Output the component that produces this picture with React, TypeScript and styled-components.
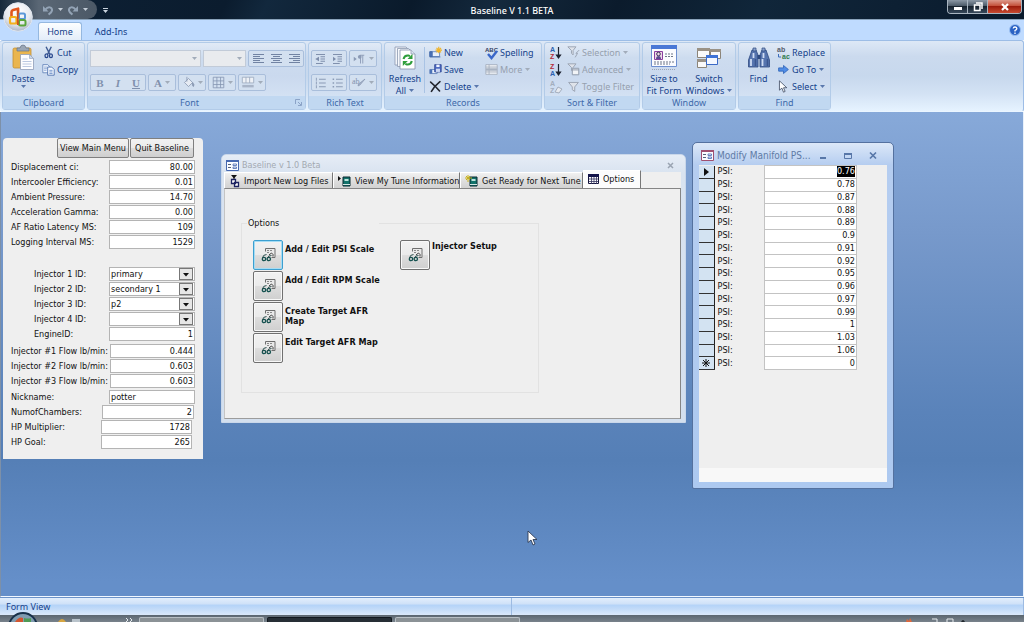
import React, { useEffect, useRef } from 'react';
import styled, { createGlobalStyle, css } from 'styled-components';

const uiFont = '"Noto Sans", "Open Sans", sans-serif';
const formFont = '"DejaVu Sans Condensed", "DejaVu Sans", sans-serif';

const GlobalStyle = createGlobalStyle`
  * { box-sizing: border-box; }
  body { margin: 0; overflow: hidden; font-family: ${uiFont}; font-size: 9px; }
  button, input, select { font: inherit; color: inherit; margin: 0; padding: 0; border: 0; background: none; border-radius: 0; }
  svg { display: block; flex: none; overflow: visible; }
`;

/* ---------- shell ---------- */

const Shell = styled.div`
  min-height: 100vh;
  display: flex;
  flex-direction: column;
`;

const TitleBar = styled.header`
  position: relative;
  display: grid;
  grid-template-columns: 1fr auto 1fr;
  height: 20px;
  color: #fff;
  background: linear-gradient(115deg, #0d2136 0%, #0b1c2e 22%, #12283d 26%, #0a1a2b 40%, #14293d 48%, #0b1b2c 60%, #10263a 74%, #0a1a2c 100%);
  border-bottom: 1px solid #8aa3bb;
`;

const QuickAccess = styled.div`
  display: flex;
  align-items: flex-start;
  gap: 6px;
`;

const QuickPill = styled.div`
  display: flex;
  align-items: center;
  gap: 4px;
  width: 97px;
  height: 19px;
  padding-left: 42px;
  border-radius: 0 10px 10px 0;
  background: linear-gradient(90deg, #16293b, #5a6775 40%, #4b5866);
  button { height: 12px; }
`;

const AppTitle = styled.h1`
  margin: 0;
  font-size: 9px;
  font-weight: 500;
  line-height: 21px;
`;

const Orb = styled.button`
  position: absolute;
  left: 3px;
  top: 2px;
  width: 30px;
  height: 30px;
  z-index: 2;
`;

const WindowButtons = styled.div`
  justify-self: end;
  display: flex;
  height: 14px;
  margin-right: 2px;
  border: 1px solid #a9b5c0;
  border-top: 0;
  border-radius: 0 0 4px 4px;
  overflow: hidden;
`;

const WindowButton = styled.button<{ $close?: boolean }>`
  display: flex;
  align-items: center;
  justify-content: center;
  width: ${p => (p.$close ? 33 : 20)}px;
  border-right: 1px solid #a9b5c0;
  background: linear-gradient(#8b98a5, #4c5a68 45%, #16222e 50%, #37485a);
  ${p => p.$close && css`
    border-right: 0;
    background: linear-gradient(#dd9a8c, #c4503a 45%, #9c1c0c 50%, #c84a30);
  `}
`;

const TabRow = styled.nav`
  display: flex;
  align-items: flex-end;
  height: 20px;
  padding-left: 38px;
  padding-right: 3px;
  background: #bfdbff;
`;

const RibbonTab = styled.button<{ $active?: boolean }>`
  width: 44px;
  height: 18px;
  color: #15428b;
  line-height: 17px;
  border-radius: 3px 3px 0 0;
  ${p => p.$active && css`
    background: linear-gradient(#fdfeff, #e3edf9);
    border: 1px solid #95b8e0;
    border-bottom: 0;
  `}
`;

const TabGap = styled.span<{ $grow?: boolean }>`
  width: 7px;
  flex: ${p => (p.$grow ? '1 0 auto' : 'none')};
`;

const HelpButton = styled.button`
  height: 12px;
  margin-bottom: 4px;
`;

/* ---------- ribbon ---------- */

const Ribbon = styled.section`
  display: flex;
  gap: 2px;
  height: 72px;
  padding: 1px 2px;
  border: 1px solid #9dbde6;
  border-left: 0;
  border-bottom-color: #eaf5ff;
  border-radius: 3px;
  background: linear-gradient(#dde8f6, #cbdaee 22%, #c7d8ed 50%, #d3e2f4 75%, #e6f3ff);
`;

const Group = styled.section<{ $width: number }>`
  flex: none;
  display: flex;
  flex-direction: column;
  width: ${p => p.$width}px;
  border: 1px solid #b2cbe8;
  border-radius: 3px;
  background: linear-gradient(#e1eaf6, #cddcef 22%, #cad9ee 50%, #d9e6f6);
  color: #15428b;
`;

const GroupBody = styled.div<{ $pad?: number }>`
  flex: 1 1 0;
  min-height: 0;
  display: flex;
  padding: 0 ${p => p.$pad ?? 4}px;
`;

const GroupTitle = styled.h2<{ $launcher?: boolean }>`
  flex: none;
  display: flex;
  align-items: center;
  justify-content: center;
  position: relative;
  margin: 0;
  height: 13px;
  padding-right: ${p => (p.$launcher ? 14 : 0)}px;
  font-size: 9px;
  font-weight: 400;
  color: #3e6aaa;
  background: #c1d8f1;
  svg { position: absolute; right: 3px; }
`;

const BigButton = styled.button<{ $width: number }>`
  flex: none;
  align-self: flex-start;
  display: flex;
  flex-direction: column;
  align-items: center;
  width: ${p => p.$width}px;
  padding-top: 2px;
  line-height: 12px;
  color: #15428b;
  white-space: nowrap;
  svg:first-child { margin-bottom: 2px; }
`;

const Stack = styled.div<{ $width?: number }>`
  flex: none;
  display: flex;
  flex-direction: column;
  padding-top: 1px;
  width: ${p => (p.$width ? p.$width + 'px' : 'auto')};
`;

const SmallButton = styled.button`
  flex: none;
  display: flex;
  align-items: center;
  gap: 2px;
  height: 17px;
  color: #15428b;
  white-space: nowrap;
  &:disabled { color: #96a0ae; }
`;

const Caption = styled.span`
  display: flex;
  align-items: center;
  gap: 3px;
`;

const Divider = styled.span`
  flex: none;
  width: 1px;
  height: 46px;
  margin: 4px 4px 0 0;
  background: #a9c3e4;
`;

const ToolRows = styled.div`
  display: flex;
  flex-direction: column;
  gap: 7px;
  padding-top: 7px;
`;

const ToolRow = styled.div`
  display: flex;
  gap: 2px;
  height: 17px;
`;

const Combo = styled.select<{ $width: number }>`
  appearance: none;
  width: ${p => p.$width}px;
  height: 17px;
  border: 1px solid #c2cbd8;
  background: #e9ebee;
  opacity: 1;
`;

const ComboBox = styled.label`
  position: relative;
  display: flex;
  svg { position: absolute; right: 4px; top: 7px; }
`;

const ToolSet = styled.div`
  display: flex;
  border: 1px solid #a9bedb;
  border-radius: 2px;
  background: #d3e0f0;
`;

const Tool = styled.button<{ $width: number; $serif?: boolean }>`
  display: flex;
  align-items: center;
  justify-content: center;
  gap: 3px;
  width: ${p => p.$width}px;
  color: #8090ad;
  ${p => p.$serif && css`font: bold 11px "Liberation Serif", serif;`}
`;

/* ---------- workspace ---------- */

const Workspace = styled.main`
  position: relative;
  flex: 1;
  min-height: 400px;
  border-left: 1px solid #7d90a8;
  border-right: 1px solid #e8f1fc;
  border-bottom: 1px solid #f2f8ff;
  background: linear-gradient(#87a9d9, #7799cb 25%, #5a83ba 62%, #557fb6 72%, #658fc9 97%);
  font-family: ${formFont};
  color: #111;
`;

const TunePanel = styled.form`
  position: absolute;
  left: 2px;
  top: 26px;
  width: 200px;
  padding-bottom: 10px;
  border-radius: 4px 4px 0 0;
  background: #efefef;
`;

const PanelActions = styled.div`
  display: flex;
  justify-content: flex-end;
  gap: 1px;
  padding-right: 9px;
  margin-bottom: 1px;
`;

const PanelButton = styled.button<{ $width: number }>`
  width: ${p => p.$width}px;
  height: 20px;
  border: 1px solid #7f7f7f;
  border-radius: 2px;
  background: linear-gradient(#f2f2f2, #ebebeb 48%, #dcdcdc 52%, #cfcfcf);
  white-space: nowrap;
`;

const FieldGroup = styled.div<{ $before?: number }>`
  margin-top: ${p => p.$before ?? 0}px;
`;

const FieldRow = styled.div<{ $indent?: boolean; $end: number }>`
  display: flex;
  align-items: center;
  justify-content: space-between;
  height: 15px;
  padding-left: ${p => (p.$indent ? 31 : 8)}px;
  padding-right: ${p => p.$end}px;
  white-space: nowrap;
`;

const fieldBox = css`
  height: 14px;
  border: 1px solid #b4b4b4;
  background: #fff;
`;

const Field = styled.input<{ $width: number; $left?: boolean }>`
  ${fieldBox}
  width: ${p => p.$width}px;
  padding: 0 1px;
  text-align: ${p => (p.$left ? 'left' : 'right')};
`;

const Picker = styled.span`
  position: relative;
  display: block;
  width: 86px;
  height: 14px;
  select {
    ${fieldBox}
    appearance: none;
    display: block;
    width: 100%;
    padding: 0 1px;
  }
  svg { position: absolute; right: 2px; top: 1px; pointer-events: none; }
`;

const MainWindow = styled.section`
  position: absolute;
  left: 220px;
  top: 42px;
  width: 465px;
  padding: 0 4px 3px 2px;
  border: 1px solid #c9d7ea;
  border-radius: 5px 5px 0 0;
  background: linear-gradient(#e6edf6, #d9e3f0 18px, #d3dfee);
`;

const MainTitle = styled.header`
  display: flex;
  align-items: center;
  gap: 3px;
  height: 17px;
  padding: 3px 7px 0 2px;
  color: #a3a9b1;
  button { margin-left: auto; height: 8px; }
`;

const Pages = styled.div`
  background: #efefef;
`;

const PageTabs = styled.div`
  display: flex;
  align-items: flex-end;
  height: 16px;
`;

const PageTab = styled.button<{ $width: number; $active?: boolean }>`
  flex: none;
  display: flex;
  align-items: center;
  gap: 4px;
  width: ${p => p.$width}px;
  height: 16px;
  padding-left: 4px;
  border-right: 1px solid #777;
  border-top: 1px solid #fff;
  border-left: 1px solid #fff;
  background: linear-gradient(#f1f1f1, #dcdcdc 60%, #d2d2d2);
  white-space: nowrap;
  ${p => p.$active && css`
    height: 18px;
    padding-bottom: 2px;
    background: #fcfcfc;
  `}
`;

const PageBody = styled.div`
  height: 231px;
  padding: 29px 0 0 16px;
  border-top: 1px solid #858585;
  border-right: 1px solid #858585;
  border-bottom: 1px solid #9c9c9c;
  border-left: 1px solid #c4c4c4;
`;

const OptionsFrame = styled.fieldset`
  width: 298px;
  height: 175px;
  margin: 0;
  padding: 11px 0 0 11px;
  border: 1px solid #e2e2e2;
  legend {
    width: 132px;
    margin-left: -6px;
    padding: 0 0 0 1px;
    line-height: 11px;
  }
`;

const OptionColumns = styled.div`
  display: flex;
  gap: 17px;
`;

const OptionList = styled.div<{ $width: number }>`
  display: flex;
  flex-direction: column;
  gap: 1px;
  width: ${p => p.$width}px;
`;

const OptionRow = styled.div<{ $raised?: boolean }>`
  display: flex;
  gap: 2px;
  label {
    max-width: 98px;
    padding-top: ${p => (p.$raised ? 1 : 4)}px;
    font-weight: bold;
    line-height: 10px;
  }
`;

const OptionButton = styled.button<{ $focus?: boolean }>`
  flex: none;
  display: flex;
  align-items: center;
  justify-content: center;
  width: 30px;
  height: 30px;
  border: 1px solid ${p => (p.$focus ? '#3c9fd0' : '#707070')};
  border-radius: 2px;
  box-shadow: inset 0 0 0 1px ${p => (p.$focus ? '#a5dcf4' : '#f8f8f8')};
  background: linear-gradient(#f1f1f1, #ebebeb 48%, #dddddd 52%, #cfcfcf);
`;

const PsiWindow = styled.section`
  position: absolute;
  left: 691px;
  top: 30px;
  width: 202px;
  padding: 0 6px 6px;
  border: 1px solid #54719f;
  border-radius: 5px 5px 2px 2px;
  background: linear-gradient(#dce8f8, #b5cdf0 22px, #adc9f0);
`;

const PsiTitle = styled.header`
  display: flex;
  align-items: center;
  height: 22px;
  padding: 3px 10px 0 2px;
  gap: 3px;
  color: #5f7ba6;
  font-size: 10px;
  h2 { margin: 0; font-size: 10px; font-weight: 400; white-space: nowrap; }
`;

const PsiControls = styled.div`
  display: flex;
  gap: 17px;
  margin-left: auto;
  button { height: 9px; }
`;

const PsiBody = styled.div`
  min-height: 317px;
  display: flex;
  flex-direction: column;
  justify-content: space-between;
  background: #efefef;
`;

const PsiTable = styled.table`
  width: 158px;
  height: 205px;
  border-collapse: collapse;
  th, td { padding: 0; line-height: 11px; }
  th { text-align: left; font-weight: 400; padding-left: 3px; }
`;

const Selector = styled.td`
  width: 15px;
  border-right: 1px solid #222;
  border-bottom: 1px solid #333;
  background: #d3e3f2;
  svg { margin: 0 auto; }
`;

const ValueCell = styled.td`
  width: 92px;
  border: 1px solid #c3c3c3;
  background: #fff;
`;

const ValueInput = styled.input`
  display: block;
  width: 100%;
  height: 11px;
  padding-right: 1px;
  text-align: right;
  outline: 0;
  &::selection { background: #000; color: #fff; }
`;

const PsiFoot = styled.div`
  height: 14px;
  background: #f8f8f8;
`;

const Pointer = styled.div`
  position: absolute;
  left: 526px;
  top: 418px;
`;

/* ---------- bottom bars ---------- */

const StatusBar = styled.footer`
  display: flex;
  height: 18px;
  border-top: 1px solid #6c93c8;
  background: linear-gradient(#e2eefc, #cfe1f8 35%, #b4d3f8 42%, #bfd9f8 60%, #dbe9fa);
  color: #15428b;
  line-height: 17px;
`;

const StatusText = styled.span`
  flex: 1;
  padding-left: 6px;
  border-right: 1px solid #9dbbe2;
`;

const TaskBar = styled.div`
  position: relative;
  display: flex;
  gap: 3px;
  height: 7px;
  padding: 2px 0 0 139px;
  background: linear-gradient(#5b6670, #78828b);
`;

const TaskButton = styled.button<{ $active?: boolean }>`
  width: 125px;
  height: 5px;
  padding-left: 8px;
  border: 1px solid ${p => (p.$active ? '#12181e' : '#b8bfc4')};
  border-bottom: 0;
  border-radius: 2px 2px 0 0;
  background: ${p => (p.$active ? '#262e35' : '#8b9296')};
`;

const StartOrb = styled.button`
  position: absolute;
  left: 7px;
  bottom: 0;
  height: 10px;
  overflow: hidden;
`;

const LaunchIcons = styled.div<{ $left: number }>`
  position: absolute;
  left: ${p => p.$left}px;
  bottom: 0;
`;

/* ---------- icons ---------- */

const Arrow = ({ color = '#5a78ad' }: { color?: string }) => (
  <svg width="5" height="3" viewBox="0 0 5 3"><path d="M0 0h5L2.500 3z" fill={color} /></svg>
);

const Svg = ({ w = 14, h = 14, vb = 16, children }: { w?: number; h?: number; vb?: number; children: React.ReactNode }) => (
  <svg width={w} height={h} viewBox={`0 0 ${vb} ${vb}`} fill="none">{children}</svg>
);

const OfficeLogo = () => (
  <svg width="30" height="30" viewBox="0 0 30 30" fill="none">
    <defs>
      <radialGradient id="orb" cx=".5" cy=".3" r=".75">
        <stop offset="0" stopColor="#fff" /><stop offset=".6" stopColor="#e6e9ee" /><stop offset="1" stopColor="#9eabc0" />
      </radialGradient>
    </defs>
    <circle cx="15" cy="15" r="14.300" fill="url(#orb)" stroke="#dfe5ee" strokeWidth="1" />
    <path d="M8.500 15V10q0-1.600 1.600-2l5-1.300V13" stroke="#e1551c" strokeWidth="2.600" strokeLinejoin="round" />
    <rect x="7" y="15" width="6.500" height="6.500" rx="1.500" stroke="#f3b01c" strokeWidth="2.200" />
    <rect x="16" y="11.500" width="6" height="5.500" rx="1.500" stroke="#5c98d8" strokeWidth="2" />
    <rect x="16" y="18" width="6.500" height="5.500" rx="1.500" stroke="#5aa63c" strokeWidth="2" />
    <path d="M14.800 8v15" stroke="#d2521c" strokeWidth="1.800" />
  </svg>
);

const Undo = ({ flip }: { flip?: boolean }) => (
  <svg width="12" height="12" viewBox="0 0 12 12" fill="none">
    <g transform={flip ? 'matrix(-1 0 0 1 12 0)' : undefined}>
      <path d="M3.500 5.500C6 2 10.500 3 10 6.500 9.700 8.500 8 9.500 6.500 10.500" stroke="#93a3b5" strokeWidth="2" />
      <path d="M1 2v5.500h5.500z" fill="#93a3b5" />
    </g>
  </svg>
);

const PasteIcon = () => (
  <svg width="26" height="26" viewBox="0 0 26 26">
    <rect x="3" y="3" width="18" height="20" rx="1.500" fill="#eab54e" stroke="#c28f35" strokeWidth=".8" />
    <path d="M7 6V3h3q.5-3 3-3t3 3h3v3z" fill="#9aa6b5" stroke="#667488" strokeWidth=".7" />
    <path d="M10.500 9.500h9l4 4v11h-13z" fill="#fdfdff" stroke="#8f9db8" strokeWidth=".8" />
    <path d="M19.500 9.500v4h4z" fill="#cbd7ea" stroke="#8f9db8" strokeWidth=".6" />
    <path d="M12.500 14h5M12.500 16.500h9M12.500 19h9M12.500 21.500h9" stroke="#b3c2de" strokeWidth=".9" />
  </svg>
);

const CutIcon = () => (
  <Svg w={13} h={13}>
    <path d="M5 1l4.500 9M11.500 1L7 10" stroke="#3e5a92" strokeWidth="1.700" />
    <ellipse cx="5.500" cy="12" rx="1.800" ry="2.300" stroke="#27468c" strokeWidth="1.600" />
    <ellipse cx="11" cy="12" rx="1.800" ry="2.300" stroke="#27468c" strokeWidth="1.600" />
  </Svg>
);

const CopyIcon = () => (
  <Svg w={13} h={13}>
    <path d="M1 2h6l2 2v8H1z" fill="#eef4fd" stroke="#5f80b8" />
    <path d="M2.500 5h4M2.500 7h4M2.500 9h3" stroke="#86a3d2" />
    <path d="M7 5h5l3 3v7H7z" fill="#f8fbff" stroke="#3f65a8" />
    <path d="M9 9h4M9 11h4M9 13h4" stroke="#5b82c4" />
  </Svg>
);

const AlignIcon = ({ kind }: { kind: 'l' | 'c' | 'r' }) => {
  const short = kind === 'l' ? 0 : kind === 'c' ? 2 : 4;
  return (
    <svg width="11" height="10" viewBox="0 0 11 10">
      {[0, 2, 4, 6, 8].map((y, i) => (
        <rect key={y} x={i % 2 ? short : 0} y={y} width={i % 2 ? 7 : 11} height="1" fill="#7183a3" />
      ))}
    </svg>
  );
};

const BucketIcon = () => (
  <Svg w={13} h={13}><path d="M3 8l5-5 5 5-5 5z" fill="#e6ebf3" stroke="#8997b1" /><path d="M6 1v6M13 8q3 3 1 5-2-1-1-5" stroke="#8997b1" fill="#8997b1" /></Svg>
);

const GridIcon = () => (
  <Svg w={13} h={13}><path d="M1.500 1.500h13v13h-13zM1.500 6h13M1.500 10.500h13M6 1.500v13M10.500 1.500v13" stroke="#8595b2" /></Svg>
);

const RowColorIcon = () => (
  <Svg w={14} h={13}><path d="M1 1.500h14v7H1zM5.500 1.500v7M10 1.500v7" fill="#eef1f6" stroke="#9aa7bd" /><path d="M1 11h14v3H1z" fill="#a9b5c8" /></Svg>
);

const IndentIcon = ({ out }: { out?: boolean }) => (
  <Svg w={13} h={12}>
    <path d="M2 2h12M8 5h6M8 8h6M8 11h6M2 14h9" stroke="#7d8dab" strokeWidth="1.300" />
    <path d={out ? 'M6 5v6L1 8z' : 'M2 5v6l4-3z'} fill="#7d8dab" />
  </Svg>
);

const ListIcon = ({ numbered }: { numbered?: boolean }) => (
  <Svg w={13} h={12}>
    <path d="M6 3h9M6 8h9M6 13h9" stroke="#8b9ab5" strokeWidth="1.400" />
    <path d={numbered ? 'M2.500 1v4M2.500 6v4M2.500 11v4' : 'M1.500 3h2M1.500 8h2M1.500 13h2'} stroke="#8b9ab5" strokeWidth={numbered ? 1.200 : 2} />
  </Svg>
);

const ParagraphIcon = () => (
  <Svg w={14} h={12}>
    <path d="M1 5l4 3-4 3z" fill="#8b9ab5" />
    <path d="M10 14V3M13 14V3M15 3H9" stroke="#8b9ab5" strokeWidth="1.200" /><circle cx="9" cy="5" r="2.500" fill="#8b9ab5" />
  </Svg>
);

const PenIcon = () => (
  <svg width="14" height="12" viewBox="0 0 14 12" fill="none">
    <text x="0" y="7" fontSize="8" fontFamily="Liberation Serif" fill="#8191ad">ab</text>
    <path d="M13 2L8 8l-2 1 .5-2z" fill="#a5b1c6" stroke="#8191ad" strokeWidth=".6" />
  </svg>
);

const RefreshIcon = () => (
  <svg width="24" height="26" viewBox="0 0 24 26" fill="none">
    <path d="M2 2h11l3 3v15H2z" fill="#f3f6fb" stroke="#8b98b0" strokeWidth=".8" />
    <path d="M4.500 3.500h11l3 3v15h-14z" fill="#f6f8fc" stroke="#8b98b0" strokeWidth=".8" />
    <path d="M7 5h11l4 4v15H7z" fill="#fff" stroke="#8391aa" strokeWidth=".8" />
    <path d="M18 5v4h4" fill="#dce4f0" stroke="#8391aa" strokeWidth=".7" />
    <path d="M10.500 14q1-4 5-3.500l1.500.6" stroke="#2f9e3c" strokeWidth="2" /><path d="M19.500 9v5h-5z" fill="#2f9e3c" />
    <path d="M18.800 16q-1 4-5 3.500l-1.500-.6" stroke="#2f9e3c" strokeWidth="2" /><path d="M9.800 21v-5h5z" fill="#2f9e3c" />
  </svg>
);

const NewIcon = () => (
  <Svg w={13} h={13}>
    <path d="M1 7h12v6H1z" fill="#e8f0fb" stroke="#5e7fb8" /><path d="M1 7h3v6H1zM1 13.500h13" fill="#4b73b8" stroke="#3f66a8" />
    <path d="M12 1v8M8 5h8M9.200 2.200l5.600 5.600M14.800 2.200L9.200 7.800" stroke="#f0b429" strokeWidth="1.400" />
  </Svg>
);

const SaveIcon = () => (
  <Svg w={13} h={13}>
    <path d="M1 8h9v5H1z" fill="#e8f0fb" stroke="#5e7fb8" /><path d="M1 8h3v5H1z" fill="#4b73b8" />
    <path d="M7 2h8v9H7z" fill="#4966c0" stroke="#2e4693" /><path d="M9 2h4v3H9z" fill="#eef3ff" /><path d="M8.500 7h5v4h-5z" fill="#ccd8f4" />
  </Svg>
);

const DeleteIcon = () => (
  <Svg w={13} h={13}><path d="M2 2.500q5 4 11 11M13.500 2Q7 7 3 14" stroke="#22252c" strokeWidth="2" strokeLinecap="round" /></Svg>
);

const SpellingIcon = () => (
  <svg width="13" height="14" viewBox="0 0 13 14" fill="none">
    <text x="0" y="6" fontSize="6" fontWeight="bold" fontFamily="Liberation Sans" fill="#33415f">ABC</text>
    <path d="M3 8l3.500 4L12 5" stroke="#3a67c9" strokeWidth="2.400" />
  </svg>
);

const MoreIcon = () => (
  <Svg w={13} h={13}><path d="M1 2h14v12H1zM1 5h14M1 11h14M5 2v12" fill="#eceff3" stroke="#a3adbb" /><path d="M1 6.500h14v3H1z" fill="#a9b3c2" /></Svg>
);

const SortIcon = ({ top, bottom, muted }: { top: string; bottom: string; muted?: boolean }) => (
  <svg width="13" height="17" viewBox="0 0 13 17" fill="none">
    <text x="1" y="8" fontSize="7" fontWeight="bold" fontFamily="Liberation Sans" fill={muted ? '#a3adbd' : top === 'A' ? '#2d5fb0' : '#b32b3a'}>{top}</text>
    <text x="1" y="15" fontSize="7" fontWeight="bold" fontFamily="Liberation Sans" fill={muted ? '#a3adbd' : top === 'A' ? '#b32b3a' : '#2d5fb0'}>{bottom}</text>
    {muted
      ? <path d="M6 14l3-5 4 2-3 4z" fill="#e6eaf0" stroke="#a3adbd" />
      : <path d="M9.500 3v8M7.500 11h4L9.500 14z" stroke="#1c2230" strokeWidth="1.200" fill="#1c2230" />}
  </svg>
);

const FunnelIcon = ({ kind }: { kind: 'bolt' | 'sheet' | 'plain' }) => (
  <Svg w={13} h={13}>
    <path d={kind === 'plain' ? 'M2 3h12L9.500 8.500V14l-3-2V8.500z' : 'M1 1h10L7.500 5.500V11l-2-2V5.500z'} fill="#dfe3ea" stroke="#9ba5b4" strokeWidth="1.200" />
    {kind === 'bolt' && <path d="M15 5l-4 4h2l-3 5" stroke="#9ba5b4" strokeWidth="1.200" />}
    {kind === 'sheet' && <path d="M6.500 6.500h8v8h-8zM6.500 8.500h8" fill="#f2f4f7" stroke="#8f9aab" strokeWidth="1.200" />}
  </Svg>
);

const SizeFormIcon = () => (
  <svg width="26" height="26" viewBox="0 0 26 26" fill="none">
    <path d="M.5.5h25v21H.5z" fill="#fbfcff" stroke="#6d8fd0" /><path d="M0 0h26v4H0z" fill="#4a78d6" />
    <path d="M3.500 6.500h8v8h-8z" fill="#efd8e8" stroke="#8a3fa0" /><circle cx="7.500" cy="9" r="1.800" stroke="#3a3158" /><path d="M5 14q0-3 2.500-3T10 14" fill="#5a4a90" />
    <path d="M14 9h9M14 11.500h9M3 17h20M3 19h16" stroke="#6d7688" strokeDasharray="2 1" />
    <path d="M1 24.500h24" stroke="#9aa4b6" strokeDasharray="1 1" />
  </svg>
);

const SwitchIcon = () => (
  <svg width="26" height="26" viewBox="0 0 26 26" fill="none">
    <path d="M1.500 3.500h12v9h-12zM14.500 4.500h10v9h-10zM1.500 14.500h9v8h-9z" fill="#fafafa" stroke="#8b8478" />
    <path d="M1 3h13v3H1zM14 4h11v3H14zM1 14h10v3H1z" fill="#9a9286" />
    <path d="M10.500 10.500h11v9h-11z" fill="#f4f8ff" stroke="#3a69c6" /><path d="M10 10h12v3H10z" fill="#3f74d8" />
  </svg>
);

const BinocularsIcon = () => (
  <svg width="24" height="26" viewBox="0 0 24 26" fill="none">
    <path d="M5 5h4l2 5v12H1.500v-7z" fill="#5674ae" stroke="#2f4a80" strokeWidth=".8" /><path d="M19 5h-4l-2 5v12h9.500v-7z" fill="#5674ae" stroke="#2f4a80" strokeWidth=".8" />
    <path d="M6 3h3v3H6zM15 3h3v3h-3z" fill="#8ba2cf" stroke="#2f4a80" strokeWidth=".7" /><path d="M10.500 10h3v4h-3z" fill="#2f4a80" />
    <path d="M4 14v7M6.500 8v5M15.500 14v7M16.500 8v5" stroke="#cfdcf3" strokeWidth="1.800" /><path d="M8.500 14v7M20.500 14v7" stroke="#3b568f" strokeWidth="1.500" />
  </svg>
);

const ReplaceIcon = () => (
  <svg width="13" height="14" viewBox="0 0 13 14" fill="none">
    <text x="0" y="6" fontSize="7" fontWeight="bold" fontFamily="Liberation Sans" fill="#555d6b">ab</text>
    <text x="5" y="13" fontSize="7" fontWeight="bold" fontFamily="Liberation Sans" fill="#2f7a4a">ac</text>
    <path d="M1.500 8v3H4" stroke="#3d6dbb" />
  </svg>
);

const GoToIcon = () => (
  <Svg w={13} h={13}><path d="M2 6h6V3l6 5-6 5v-3H2z" fill="#4f8ce6" stroke="#2d62b8" /></Svg>
);

const CursorShape = ({ w, h }: { w: number; h: number }) => (
  <svg width={w} height={h} viewBox="0 0 12 16"><path d="M1 1v11.500l3-2.500 2 5 2-1-2-4.500h4z" fill="#fff" stroke="#2c3a52" strokeWidth=".9" /></svg>
);

const FormIcon = ({ accent = '#4668b0' }: { accent?: string }) => (
  <svg width="13" height="11" viewBox="0 0 13 11" fill="none">
    <path d="M.5.5h12v10H.5z" fill="#fafcff" stroke={accent} /><path d="M0 0h13v2H0z" fill={accent} />
    <path d="M2 4.500h3M2 7.500h3" stroke="#555f78" /><path d="M7 4h3.500v1.500H7zM7 7h3.500v1.500H7z" stroke="#4668b0" strokeWidth=".8" />
  </svg>
);

const ImportIcon = () => (
  <svg width="11" height="12" viewBox="0 0 11 12" fill="none">
    <path d="M2 0h6L5 3.500z" fill="#111" /><path d="M5 2v3" stroke="#111" />
    <path d="M2.500 4.500h4v4h-4zM5.500 7.500h4v4h-4z" fill="#fff" stroke="#1c2260" strokeWidth="1.300" />
  </svg>
);

const BookIcon = ({ spark }: { spark?: boolean }) => (
  <svg width="13" height="12" viewBox="0 0 13 12" fill="none">
    <path d="M5 2h7v9H5z" fill="#12736b" stroke="#0b2b33" /><path d="M6.500 4h4v2h-4z" fill="#bfe3dc" /><path d="M5 9.500h7" stroke="#d6e8e6" />
    {spark
      ? <path d="M3 0v7M0 3h7M1 1l4 4M5 1L1 5" stroke="#c9b21c" />
      : <path d="M0 1v5l3-2.500z" fill="#111" />}
  </svg>
);

const TableIcon = () => (
  <svg width="11" height="10" viewBox="0 0 11 10" fill="none">
    <path d="M.5.5h10v9H.5z" fill="#fff" stroke="#14143c" /><path d="M0 0h11v3H0z" fill="#14144a" />
    <path d="M1 5h9M1 7.500h9M3.500 3v7M6 3v7M8.500 3v7" stroke="#33335e" strokeWidth=".8" />
  </svg>
);

const GlassesIcon = () => (
  <svg width="15" height="14" viewBox="0 0 15 14" fill="none">
    <path d="M4.500 3.500v-3h9.500v9h-3.500" fill="#e9e9e9" stroke="#6e6e6e" /><path d="M6 2.500h6M6 4.500h2" stroke="#8a8a8a" strokeDasharray="2 1" />
    <path d="M8 7l2.500-2 1.500 1.500v2" stroke="#3a3a3a" />
    <circle cx="3" cy="11" r="1.700" stroke="#15514f" strokeWidth="1.300" /><circle cx="7.800" cy="11" r="1.700" stroke="#15514f" strokeWidth="1.300" />
    <path d="M1.500 10Q2 6.500 5.500 6.500M6.500 10q.5-2.500 4-2.500" stroke="#2c4f4e" />
  </svg>
);

const DropArrow = () => (
  <svg width="14" height="12" viewBox="0 0 14 12"><rect x=".5" y=".5" width="13" height="11" fill="#e6e6e6" stroke="#777" /><path d="M4 5h6L7 8.500z" fill="#111" /></svg>
);

/* ---------- data ---------- */

type FieldSpec = { id: string; label: string; value: string; width?: number; end?: number; indent?: boolean; pick?: boolean; left?: boolean };

const fieldGroups: { before: number; fields: FieldSpec[] }[] = [
  { before: 0, fields: [
    { id: 'displacement', label: 'Displacement ci:', value: '80.00' },
    { id: 'intercooler', label: 'Intercooler Efficiency:', value: '0.01' },
    { id: 'ambient', label: 'Ambient Pressure:', value: '14.70' },
    { id: 'gamma', label: 'Acceleration Gamma:', value: '0.00' },
    { id: 'latency', label: 'AF Ratio Latency MS:', value: '109' },
    { id: 'interval', label: 'Logging Interval MS:', value: '1529' },
  ] },
  { before: 17, fields: [
    { id: 'inj1', label: 'Injector 1 ID:', value: 'primary', indent: true, pick: true },
    { id: 'inj2', label: 'Injector 2 ID:', value: 'secondary 1', indent: true, pick: true },
    { id: 'inj3', label: 'Injector 3 ID:', value: 'p2', indent: true, pick: true },
    { id: 'inj4', label: 'Injector 4 ID:', value: '', indent: true, pick: true },
    { id: 'engine', label: 'EngineID:', value: '1', indent: true },
  ] },
  { before: 2, fields: [
    { id: 'flow1', label: 'Injector #1 Flow lb/min:', value: '0.444', width: 85 },
    { id: 'flow2', label: 'Injector #2 Flow lb/min:', value: '0.603', width: 85 },
    { id: 'flow3', label: 'Injector #3 Flow lb/min:', value: '0.603', width: 85 },
  ] },
  { before: 1, fields: [
    { id: 'nickname', label: 'Nickname:', value: 'potter', left: true },
    { id: 'chambers', label: 'NumofChambers:', value: '2', width: 92, end: 9 },
    { id: 'multiplier', label: 'HP Multiplier:', value: '1728', width: 91, end: 11 },
    { id: 'goal', label: 'HP Goal:', value: '265', width: 91, end: 11 },
  ] },
];

const psiValues = ['0.76', '0.78', '0.87', '0.88', '0.89', '0.9', '0.91', '0.92', '0.95', '0.96', '0.97', '0.99', '1', '1.03', '1.06', '0'];

const options = [
  { id: 'psi', label: 'Add / Edit PSI Scale' },
  { id: 'rpm', label: 'Add / Edit RPM Scale' },
  { id: 'create', label: 'Create Target AFR Map' },
  { id: 'edit', label: 'Edit Target AFR Map' },
];

/* ---------- parts ---------- */

const muted = '#a2acba';

const Small = ({ icon, text, menu, disabled }: { icon: React.ReactNode; text: string; menu?: boolean; disabled?: boolean }) => (
  <SmallButton disabled={disabled}>
    {icon}
    <Caption>{text}{menu && <Arrow color={disabled ? muted : undefined} />}</Caption>
  </SmallButton>
);

const RibbonBar = () => (
  <Ribbon>
    <Group $width={83}>
      <GroupBody $pad={1}>
        <BigButton $width={38}><PasteIcon />Paste<Arrow /></BigButton>
        <Stack><Small icon={<CutIcon />} text="Cut" /><Small icon={<CopyIcon />} text="Copy" /></Stack>
      </GroupBody>
      <GroupTitle>Clipboard</GroupTitle>
    </Group>
    <Group $width={219}>
      <GroupBody $pad={2}>
        <ToolRows>
          <ToolRow>
            <ComboBox><Combo $width={111} disabled aria-label="Font name" /><Arrow color={muted} /></ComboBox>
            <ComboBox><Combo $width={43} disabled aria-label="Font size" /><Arrow color={muted} /></ComboBox>
            <ToolSet>
              <Tool $width={18} disabled aria-label="Align left"><AlignIcon kind="l" /></Tool>
              <Tool $width={18} disabled aria-label="Center"><AlignIcon kind="c" /></Tool>
              <Tool $width={18} disabled aria-label="Align right"><AlignIcon kind="r" /></Tool>
            </ToolSet>
          </ToolRow>
          <ToolRow>
            <ToolSet>
              <Tool $width={18} $serif disabled>B</Tool>
              <Tool $width={18} $serif disabled><i>I</i></Tool>
              <Tool $width={18} $serif disabled><u>U</u></Tool>
            </ToolSet>
            <ToolSet><Tool $width={26} $serif disabled>A<Arrow color={muted} /></Tool></ToolSet>
            <ToolSet><Tool $width={26} disabled aria-label="Fill color"><BucketIcon /><Arrow color={muted} /></Tool></ToolSet>
            <ToolSet><Tool $width={26} disabled aria-label="Gridlines"><GridIcon /><Arrow color={muted} /></Tool></ToolSet>
            <ToolSet><Tool $width={26} disabled aria-label="Row color"><RowColorIcon /><Arrow color={muted} /></Tool></ToolSet>
          </ToolRow>
        </ToolRows>
      </GroupBody>
      <GroupTitle $launcher>
        Font
        <svg width="7" height="7" viewBox="0 0 7 7" fill="none"><path d="M.5 5V.5H5M3 3l3 3M6.500 3v3.500H3" stroke="#8ba3c7" /></svg>
      </GroupTitle>
    </Group>
    <Group $width={74}>
      <GroupBody $pad={2}>
        <ToolRows>
          <ToolRow>
            <ToolSet>
              <Tool $width={17} disabled aria-label="Decrease indent"><IndentIcon out /></Tool>
              <Tool $width={17} disabled aria-label="Increase indent"><IndentIcon /></Tool>
            </ToolSet>
            <ToolSet><Tool $width={26} disabled aria-label="Text direction"><ParagraphIcon /><Arrow color={muted} /></Tool></ToolSet>
          </ToolRow>
          <ToolRow>
            <ToolSet>
              <Tool $width={17} disabled aria-label="Numbering"><ListIcon numbered /></Tool>
              <Tool $width={17} disabled aria-label="Bullets"><ListIcon /></Tool>
            </ToolSet>
            <ToolSet><Tool $width={26} disabled aria-label="Highlight"><PenIcon /><Arrow color={muted} /></Tool></ToolSet>
          </ToolRow>
        </ToolRows>
      </GroupBody>
      <GroupTitle>Rich Text</GroupTitle>
    </Group>
    <Group $width={158}>
      <GroupBody $pad={1}>
        <BigButton $width={38}><RefreshIcon />Refresh<Caption>All <Arrow /></Caption></BigButton>
        <Divider />
        <Stack $width={56}>
          <Small icon={<NewIcon />} text="New" />
          <Small icon={<SaveIcon />} text="Save" />
          <Small icon={<DeleteIcon />} text="Delete" menu />
        </Stack>
        <Stack>
          <Small icon={<SpellingIcon />} text="Spelling" />
          <Small icon={<MoreIcon />} text="More" menu disabled />
        </Stack>
      </GroupBody>
      <GroupTitle>Records</GroupTitle>
    </Group>
    <Group $width={96}>
      <GroupBody>
        <Stack $width={18}>
          <SmallButton aria-label="Ascending"><SortIcon top="A" bottom="Z" /></SmallButton>
          <SmallButton aria-label="Descending"><SortIcon top="Z" bottom="A" /></SmallButton>
          <SmallButton disabled aria-label="Clear all sorts"><SortIcon top="A" bottom="Z" muted /></SmallButton>
        </Stack>
        <Stack>
          <Small icon={<FunnelIcon kind="bolt" />} text="Selection" menu disabled />
          <Small icon={<FunnelIcon kind="sheet" />} text="Advanced" menu disabled />
          <Small icon={<FunnelIcon kind="plain" />} text="Toggle Filter" disabled />
        </Stack>
      </GroupBody>
      <GroupTitle>Sort &amp; Filter</GroupTitle>
    </Group>
    <Group $width={94}>
      <GroupBody $pad={1}>
        <BigButton $width={40}><SizeFormIcon />Size to<span>Fit Form</span></BigButton>
        <BigButton $width={50}><SwitchIcon />Switch<Caption>Windows <Arrow /></Caption></BigButton>
      </GroupBody>
      <GroupTitle>Window</GroupTitle>
    </Group>
    <Group $width={93}>
      <GroupBody $pad={1}>
        <BigButton $width={37}><BinocularsIcon />Find</BigButton>
        <Stack>
          <Small icon={<ReplaceIcon />} text="Replace" />
          <Small icon={<GoToIcon />} text="Go To" menu />
          <Small icon={<CursorShape w={13} h={13} />} text="Select" menu />
        </Stack>
      </GroupBody>
      <GroupTitle>Find</GroupTitle>
    </Group>
  </Ribbon>
);

const Tune = () => (
  <TunePanel onSubmit={e => e.preventDefault()}>
    <PanelActions>
      <PanelButton type="button" $width={72}>View Main Menu</PanelButton>
      <PanelButton type="button" $width={64}>Quit Baseline</PanelButton>
    </PanelActions>
    {fieldGroups.map((group, i) => (
      <FieldGroup key={i} $before={group.before}>
        {group.fields.map(f => (
          <FieldRow key={f.id} $indent={f.indent} $end={f.end ?? 8}>
            <label htmlFor={f.id}>{f.label}</label>
            {f.pick ? (
              <Picker>
                <select id={f.id} defaultValue={f.value}><option>{f.value}</option></select>
                <DropArrow />
              </Picker>
            ) : (
              <Field id={f.id} defaultValue={f.value} $width={f.width ?? 86} $left={f.left} />
            )}
          </FieldRow>
        ))}
      </FieldGroup>
    ))}
  </TunePanel>
);

const Baseline = () => (
  <MainWindow>
    <MainTitle>
      <FormIcon />
      <span>Baseline v 1.0 Beta</span>
      <button aria-label="Close form"><svg width="7" height="7" viewBox="0 0 7 7"><path d="M1 1l5 5M6 1L1 6" stroke="#9aa4b2" strokeWidth="1.500" /></svg></button>
    </MainTitle>
    <Pages>
      <PageTabs>
        <PageTab $width={109}><ImportIcon />Import New Log Files</PageTab>
        <PageTab $width={127}><BookIcon />View My Tune Information</PageTab>
        <PageTab $width={123}><BookIcon spark />Get Ready for Next Tune</PageTab>
        <PageTab $width={58} $active><TableIcon />Options</PageTab>
      </PageTabs>
      <PageBody>
        <OptionsFrame>
          <legend>Options</legend>
          <OptionColumns>
            <OptionList $width={130}>
              {options.map((o, i) => (
                <OptionRow key={o.id}>
                  <OptionButton id={o.id} $focus={i === 0}><GlassesIcon /></OptionButton>
                  <label htmlFor={o.id}>{o.label}</label>
                </OptionRow>
              ))}
            </OptionList>
            <OptionList $width={130}>
              <OptionRow $raised>
                <OptionButton id="injector"><GlassesIcon /></OptionButton>
                <label htmlFor="injector">Injector Setup</label>
              </OptionRow>
            </OptionList>
          </OptionColumns>
        </OptionsFrame>
      </PageBody>
    </Pages>
  </MainWindow>
);

const Psi = () => {
  const first = useRef<HTMLInputElement>(null);
  useEffect(() => {
    first.current?.focus();
    first.current?.select();
  }, []);
  return (
    <PsiWindow>
      <PsiTitle>
        <FormIcon accent="#a05070" />
        <h2>Modify Manifold PS...</h2>
        <PsiControls>
          <button aria-label="Minimize"><svg width="8" height="9" viewBox="0 0 8 9"><path d="M1 6h6v2H1z" fill="#5877a8" /></svg></button>
          <button aria-label="Maximize"><svg width="8" height="9" viewBox="0 0 8 9"><path d="M.5 2.500h7v5h-7z" fill="none" stroke="#5877a8" /><path d="M0 2h8v2H0z" fill="#5877a8" /></svg></button>
          <button aria-label="Close"><svg width="8" height="9" viewBox="0 0 8 9"><path d="M1 1.500l6 6M7 1.500l-6 6" stroke="#5877a8" strokeWidth="1.700" /></svg></button>
        </PsiControls>
      </PsiTitle>
      <PsiBody>
        <PsiTable>
          <tbody>
            {psiValues.map((v, i) => (
              <tr key={i}>
                <Selector>
                  {i === 0 && <svg width="6" height="8" viewBox="0 0 6 8"><path d="M1 0v8l5-4z" fill="#111" /></svg>}
                  {i === psiValues.length - 1 && <svg width="8" height="8" viewBox="0 0 8 8"><path d="M4 0v8M0 4h8M1 1l6 6M7 1L1 7" stroke="#111" /></svg>}
                </Selector>
                <th scope="row"><label htmlFor={`psi-${i}`}>PSI:</label></th>
                <ValueCell><ValueInput id={`psi-${i}`} defaultValue={v} ref={i === 0 ? first : undefined} /></ValueCell>
              </tr>
            ))}
          </tbody>
        </PsiTable>
        <PsiFoot />
      </PsiBody>
    </PsiWindow>
  );
};

export default function App() {
  return (
    <Shell>
      <GlobalStyle />
      <TitleBar>
        <QuickAccess>
          <QuickPill>
            <button aria-label="Undo"><Undo /></button>
            <Arrow color="#c3ccd6" />
            <button aria-label="Redo"><Undo flip /></button>
            <Arrow color="#c3ccd6" />
          </QuickPill>
          <svg width="5" height="14" viewBox="0 0 5 14"><path d="M0 8h5v1H0zM0 10h5L2.500 13z" fill="#c9d3de" /></svg>
        </QuickAccess>
        <AppTitle>Baseline V 1.1 BETA</AppTitle>
        <WindowButtons>
          <WindowButton aria-label="Minimize"><svg width="10" height="10" viewBox="0 0 10 10"><path d="M1 5h8v3H1z" fill="#fff" /></svg></WindowButton>
          <WindowButton aria-label="Restore"><svg width="10" height="10" viewBox="0 0 10 10" fill="none"><path d="M3 1h6v6M1.500 3h5.500v5.500H1.500z" stroke="#fff" strokeWidth="1.500" /></svg></WindowButton>
          <WindowButton $close aria-label="Close"><svg width="10" height="10" viewBox="0 0 10 10"><path d="M2 2l6 6M8 2L2 8" stroke="#fff" strokeWidth="2.200" /></svg></WindowButton>
        </WindowButtons>
        <Orb aria-label="Office"><OfficeLogo /></Orb>
      </TitleBar>
      <TabRow>
        <RibbonTab $active>Home</RibbonTab>
        <TabGap />
        <RibbonTab>Add-Ins</RibbonTab>
        <TabGap $grow />
        <HelpButton aria-label="Help">
          <svg width="12" height="12" viewBox="0 0 12 12" fill="none">
            <circle cx="6" cy="6" r="5.500" fill="#2a62c4" stroke="#9cc1f2" /><path d="M4.200 4.500Q4.500 2.800 6.200 3t1.600 1.800Q7.500 5.800 6 6.500V7.500M6 8.500V10" stroke="#fff" strokeWidth="1.300" />
          </svg>
        </HelpButton>
      </TabRow>
      <RibbonBar />
      <Workspace>
        <Tune />
        <Baseline />
        <Psi />
        <Pointer><CursorShape w={12} h={16} /></Pointer>
      </Workspace>
      <StatusBar>
        <StatusText>Form View</StatusText>
        <StatusText />
      </StatusBar>
      <TaskBar>
        <StartOrb aria-label="Start">
          <svg width="32" height="10" viewBox="0 0 32 10">
            <circle cx="16" cy="15" r="14" fill="#7f9bb0" stroke="#17304a" strokeWidth="2" />
            <path d="M8 10q4-6 8-4v4z" fill="#d2552f" /><path d="M17 6q4 1 7 0v4h-7z" fill="#4f9a55" />
          </svg>
        </StartOrb>
        <LaunchIcons $left={56}>
          <svg width="76" height="4" viewBox="0 0 76 4"><path d="M2 4q4-6 8 0z" fill="#d6a540" /><path d="M16 1h8v3h-8z" fill="#b9c3cb" /><path d="M70 0l2 2-2 2M74 0l2 2-2 2" stroke="#e8ecef" fill="none" /></svg>
        </LaunchIcons>
        <TaskButton aria-label="Task 1" />
        <TaskButton $active aria-label="Task 2" />
        <TaskButton aria-label="Task 3" />
        <LaunchIcons $left={904}>
          <svg width="62" height="4" viewBox="0 0 62 4" fill="none"><path d="M2 4l1-3 2 2 1-3 2 4z" fill="#e2673a" /><path d="M28 1h5v3M43 4V1h6v3" stroke="#e8ecef" /><path d="M57 4q2-4 4 0z" fill="#20262c" /></svg>
        </LaunchIcons>
      </TaskBar>
    </Shell>
  );
}
